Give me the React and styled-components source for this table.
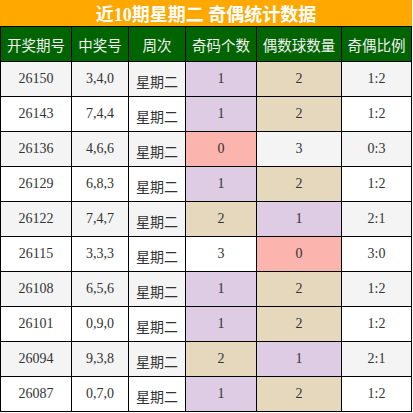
import React from 'react'
import styled, { createGlobalStyle } from 'styled-components'

const rows = [
  ['26150', '3,4,0', 1, 2],
  ['26143', '7,4,4', 1, 2],
  ['26136', '4,6,6', 0, 3],
  ['26129', '6,8,3', 1, 2],
  ['26122', '7,4,7', 2, 1],
  ['26115', '3,3,3', 3, 0],
  ['26108', '6,5,6', 1, 2],
  ['26101', '0,9,0', 1, 2],
  ['26094', '9,3,8', 2, 1],
  ['26087', '0,7,0', 1, 2],
]

const heads = ['开奖期号', '中奖号', '周次', '奇码个数', '偶数球数量', '奇偶比例']

const countColors = { 0: '#fbb4ae', 1: '#decbe4', 2: '#e5d8bd' }

export default function App() {
  return (
    <>
      <GlobalStyle />
      <Board>
        <Title>近10期星期二 奇偶统计数据</Title>
        <Grid>
          {heads.map((h) => (
            <HeadCell key={h}>{h}</HeadCell>
          ))}
          {rows.map(([issue, nums, odd, even], i) => {
            const striped = i % 2 === 0
            return (
              <React.Fragment key={issue}>
                <Cell $striped={striped}>{issue}</Cell>
                <Cell $striped={striped}>{nums}</Cell>
                <Cell $striped={striped} $cjk>星期二</Cell>
                <Cell $striped={striped} $fill={countColors[odd]}>{odd}</Cell>
                <Cell $striped={striped} $fill={countColors[even]}>{even}</Cell>
                <Cell $striped={striped}>{odd}:{even}</Cell>
              </React.Fragment>
            )
          })}
        </Grid>
      </Board>
    </>
  )
}

const GlobalStyle = createGlobalStyle`
  body {
    margin: 0;
    background: #fff;
    font-family: 'Liberation Serif', 'Noto Sans CJK SC', serif;
  }
`

const Board = styled.div`
  width: 412px;
`

const Title = styled.div`
  display: flex;
  align-items: center;
  justify-content: center;
  height: 26px;
  background: #ffa800;
  color: #fff;
  font-family: 'Liberation Serif', 'Noto Sans CJK SC', serif;
  font-weight: bold;
  font-size: 18px;
`

const Grid = styled.div`
  display: grid;
  grid-template-columns: 70px 56px 56px 70px 84px 69px;
  grid-auto-rows: 34px;
  gap: 1px;
  padding: 1px;
  background: #000;
`

const HeadCell = styled.div`
  display: flex;
  align-items: center;
  justify-content: center;
  background: #006400;
  color: #f2f2f2;
  font-family: 'Noto Sans CJK SC', sans-serif;
  font-size: 14.5px;
`

const Cell = styled.div`
  display: flex;
  align-items: center;
  justify-content: center;
  background: ${(p) => p.$fill || (p.$striped ? '#f4f4f4' : '#fff')};
  color: #333;
  font-family: ${(p) =>
    p.$cjk ? "'Noto Sans CJK SC', sans-serif" : "'Liberation Serif', serif"};
  font-size: 14px;
  padding-top: ${(p) => (p.$cjk ? '3px' : '0')};
`
